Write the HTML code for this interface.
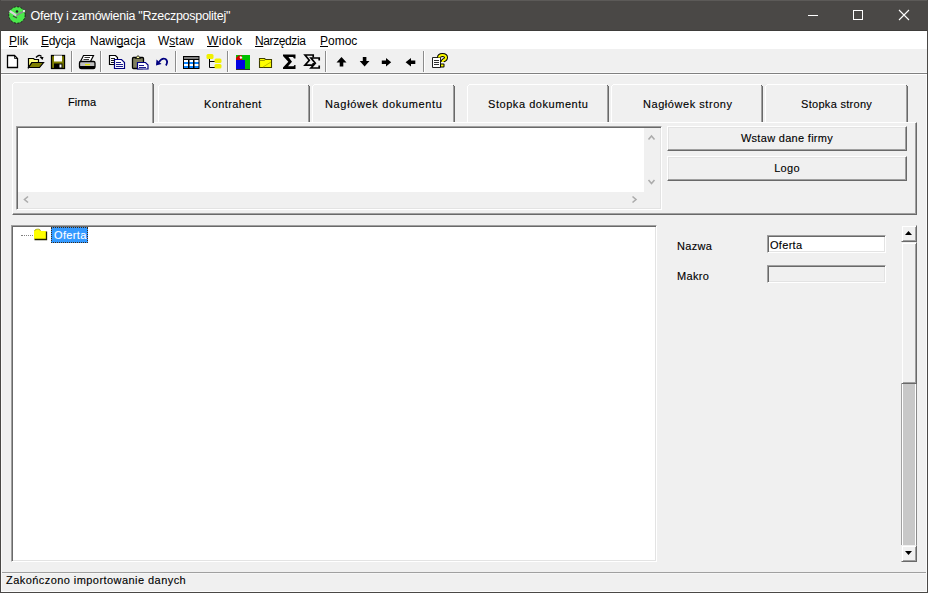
<!DOCTYPE html>
<html><head><meta charset="utf-8">
<style>
*{margin:0;padding:0;box-sizing:border-box}
html,body{width:928px;height:593px;overflow:hidden;background:#f0f0f0;font-family:"Liberation Sans",sans-serif;font-size:12px;color:#000}
.a{position:absolute}
svg{position:absolute;overflow:visible}
#title{left:0;top:0;width:928px;height:31px;background:#4a4846;border-top:1px solid #5c5a58;border-bottom:1px solid #3e3c3a}
#ttxt{left:30.5px;top:9px;color:#fff;font-size:12.5px;white-space:nowrap;letter-spacing:-0.27px}
#menu{left:1px;top:31px;width:926px;height:18px;background:#fff}
.mi{top:34px;font-size:12px;white-space:nowrap;color:#000;line-height:14px}
.mi u{text-decoration:underline;text-underline-offset:1px;text-decoration-skip-ink:none}
.sep{top:51px;width:2px;height:21px;border-left:1px solid #8c8c8c;border-right:1px solid #fff}
#bl{left:0;top:0;width:1px;height:593px;background:#4a4846}
#br{left:927px;top:0;width:1px;height:593px;background:#4a4846}
#bb{left:0;top:592px;width:928px;height:1px;background:#4a4846}
.tab{height:38px;border-top:1px solid #fff;border-left:1px solid #fff;border-right:1px solid #696969;box-shadow:inset -1px 0 0 #a0a0a0;font-size:11px;-webkit-text-stroke:0.12px #000;letter-spacing:0.3px;white-space:nowrap}
.tab::before{content:"";position:absolute;left:-1px;top:-1px;width:2px;height:2px;background:linear-gradient(#fff,#fff) 1px 1px/1px 1px no-repeat,#f0f0f0}
.tab::after{content:"";position:absolute;right:-1px;top:-1px;width:2px;height:2px;background:linear-gradient(#696969,#696969) 0 1px/1px 1px no-repeat,#f0f0f0}
.tab span{position:absolute;top:12px;line-height:14px}
.sunk{border-top:1px solid #a0a0a0;border-left:1px solid #a0a0a0;border-right:1px solid #fff;border-bottom:1px solid #fff;box-shadow:inset 1px 1px 0 #696969,inset -1px -1px 0 #e3e3e3}
.btn{border-top:1px solid #fff;border-left:1px solid #fff;border-right:1px solid #696969;border-bottom:1px solid #696969;box-shadow:inset -1px -1px 0 #a0a0a0,inset 1px 1px 0 #e3e3e3;text-align:center;font-size:11px;-webkit-text-stroke:0.12px #000;letter-spacing:0.3px;white-space:nowrap}
.sbtn{border-top:1px solid #f0f0f0;border-left:1px solid #f0f0f0;border-right:1px solid #696969;border-bottom:1px solid #696969;box-shadow:inset 1px 1px 0 #fff,inset -1px -1px 0 #a0a0a0;background:#f0f0f0}
.lbl{font-size:11px;-webkit-text-stroke:0.12px #000;letter-spacing:0.3px;white-space:nowrap;line-height:14px}
</style></head><body>
<div class="a" id="title"></div>
<svg style="left:8px;top:6px" width="18" height="18" viewBox="0 0 18 18">
<circle cx="9" cy="9" r="8.2" fill="#4be84b" stroke="#102010" stroke-width="0.9" stroke-dasharray="2 1.5"/>
<path d="M1.5 5 Q5 7 8.5 9.5" stroke="#d8d8d8" stroke-width="2.2" fill="none"/>
<path d="M8.5 9.5 Q12 7 16.5 5" stroke="#8a8a8a" stroke-width="1.8" fill="none"/>
<circle cx="9" cy="5.5" r="1.3" fill="#222"/>
<path d="M5 10 L9 12" stroke="#444" stroke-width="1.2" fill="none"/>
<circle cx="16" cy="5" r="1" fill="#fff"/>
</svg>
<div class="a" id="ttxt">Oferty i zamówienia "Rzeczpospolitej"</div>
<div class="a" style="left:808px;top:15px;width:10px;height:1px;background:#fff"></div>
<div class="a" style="left:853px;top:10px;width:10px;height:10px;border:1px solid #fff"></div>
<svg style="left:899px;top:10px" width="10" height="10" viewBox="0 0 10 10"><path d="M0 0 L10 10 M10 0 L0 10" stroke="#fff" stroke-width="1.1"/></svg>

<div class="a" id="menu"></div>
<div class="a mi" style="left:9px"><u>P</u>lik</div>
<div class="a mi" style="left:41px;letter-spacing:-0.3px"><u>E</u>dycja</div>
<div class="a mi" style="left:90px;letter-spacing:0px">Nawi<u>g</u>acja</div>
<div class="a mi" style="left:158px">W<u>s</u>taw</div>
<div class="a mi" style="left:207px;letter-spacing:0.4px"><u>W</u>idok</div>
<div class="a mi" style="left:255px;letter-spacing:-0.4px"><u>N</u>arzędzia</div>
<div class="a mi" style="left:320px"><u>P</u>omoc</div>

<!-- toolbar -->
<div class="a" style="left:1px;top:72px;width:926px;height:1px;background:#f8f8f8"></div>
<div class="a" style="left:1px;top:73px;width:926px;height:1px;background:#808080"></div>
<div class="a" style="left:1px;top:74px;width:926px;height:1px;background:#fff"></div>
<div class="a sep" style="left:71px"></div>
<div class="a sep" style="left:100px"></div>
<div class="a sep" style="left:175px"></div>
<div class="a sep" style="left:227px"></div>
<div class="a sep" style="left:325px"></div>
<div class="a sep" style="left:423px"></div>
<svg style="left:0;top:0" width="460" height="76" viewBox="0 0 460 76">
<!-- new doc x7..17 y55..67 -->
<path d="M7.5 55.5 H14.5 L17.5 58.5 V67.5 H7.5 Z" fill="#fff" stroke="#000" stroke-width="1.3"/>
<path d="M14.5 55.5 V58.5 H17.5" fill="none" stroke="#000" stroke-width="0.8"/>
<!-- open folder x28..43 y55..67 -->
<path d="M28.5 58.5 H33.5 L34.5 59.5 H38.5 V62.5 H32 L28.5 67.5 Z" fill="#ffff80" stroke="#000" stroke-width="1.2"/>
<path d="M28.5 67.5 L32 62.5 H43.5 L39.5 67.5 Z" fill="#808000" stroke="#000" stroke-width="1.2"/>
<path d="M36 57.5 Q39 54 41.5 56.5" fill="none" stroke="#000" stroke-width="1.3"/>
<path d="M39.5 57 H43.5 L42.5 60 Z" fill="#000"/>
<!-- save x51..65 y55..68 -->
<rect x="51.5" y="55.5" width="13" height="13" fill="#808000" stroke="#000" stroke-width="1.3"/>
<rect x="54" y="55.5" width="8" height="6" fill="#fff"/>
<rect x="54" y="63.5" width="8.5" height="5" fill="#000"/>
<rect x="59.5" y="64.5" width="2" height="3" fill="#fff"/>
<!-- printer x79..95 y55..69 -->
<path d="M83.5 55.5 H93.5 L90.5 61.5 H80.5 Z" fill="#fff" stroke="#000" stroke-width="1.2"/>
<path d="M84.5 57.5 H90 M83.5 59.5 H89" stroke="#000" stroke-width="0.8"/>
<rect x="79.5" y="61.5" width="15.5" height="7" rx="1.5" fill="#c0c0c0" stroke="#000" stroke-width="1.3"/>
<rect x="80" y="66" width="15" height="2.5" fill="#000"/>
<rect x="85" y="64" width="5" height="1.3" fill="#e0e000"/>
<!-- copy x109..124 y55..68 -->
<path d="M109.5 55.5 H115.5 L117.5 57.5 V64.5 H109.5 Z" fill="#fff" stroke="#000" stroke-width="1.2"/>
<path d="M111 58.5 H115 M111 60.5 H114 M111 62.5 H114" stroke="#000" stroke-width="0.9"/>
<path d="M114.5 59.5 H121.5 L124.5 62.5 V68.5 H114.5 Z" fill="#fff" stroke="#000080" stroke-width="1.2"/>
<path d="M116 62.5 H121 M116 64.5 H123 M116 66.5 H123" stroke="#000080" stroke-width="0.9"/>
<!-- paste x132..148 y55..69 -->
<rect x="132.5" y="57.5" width="11" height="11" rx="1" fill="#808060" stroke="#000" stroke-width="1.3"/>
<path d="M135.5 58.5 L138 55.5 L140.5 58.5 Z" fill="#ffffa0" stroke="#000" stroke-width="0.8"/>
<path d="M137.5 62.5 H145.5 L148 65 V69 H137.5 Z" fill="#fff" stroke="#000080" stroke-width="1.2"/>
<path d="M139 65.5 H144 M139 67.5 H146" stroke="#000080" stroke-width="0.9"/>
<!-- undo x156..168 y58..66 -->
<path d="M159 62 Q162 57.5 165.5 59 Q168.5 61 166 65.5" fill="none" stroke="#000080" stroke-width="1.8"/>
<path d="M156 65.5 L156.5 59.5 L161.5 64 Z" fill="#000080"/>
<!-- table x183..199 y56..68 -->
<rect x="183" y="56" width="16.5" height="13" fill="#000"/>
<rect x="184" y="57" width="14.5" height="2" fill="#808080"/>
<rect x="184" y="60" width="14.5" height="2" fill="#fff"/>
<rect x="184" y="62" width="14.5" height="2" fill="#0a84ff"/>
<rect x="184" y="64" width="14.5" height="2" fill="#fff"/>
<rect x="184" y="66" width="14.5" height="2" fill="#0a84ff"/>
<rect x="188" y="60" width="1.5" height="8" fill="#000"/>
<rect x="193" y="60" width="1.5" height="8" fill="#000"/>
<!-- tree x207..222 y54..69 -->
<path d="M209.5 58 V67.5 H215 M209.5 61.5 H215" fill="none" stroke="#000" stroke-width="1"/>
<rect x="206.5" y="54" width="7" height="5" rx="1.5" fill="#f0f000"/>
<rect x="214.5" y="58.5" width="7" height="4.5" rx="1.5" fill="#f0f000"/>
<rect x="214.5" y="64" width="7" height="4.5" rx="1.5" fill="#f0f000"/>
<!-- color box x236..250 y55..69 -->
<rect x="236" y="55" width="14" height="14" fill="#00c000"/>
<rect x="236" y="60" width="9" height="9" fill="#0000e0"/>
<rect x="236" y="69" width="14" height="0.8" fill="#000"/>
<path d="M236 60 V58 L238.5 55.5 H242 V60 Z" fill="#d00000"/>
<path d="M239.5 57 L241 56 L242.5 58 L240.5 59 Z" fill="#fff"/>
<!-- folder x259..272 y57..68 -->
<path d="M259.5 58.5 H264.5 L265.5 59.5 H271.5 V67.5 H259.5 Z" fill="#ffff00" stroke="#404000" stroke-width="1.1"/>
<path d="M259.5 60.5 H264.5 L265.5 59.5" fill="none" stroke="#808000" stroke-width="0.8"/>
<path d="M263 67 L271 62" stroke="#c0c000" stroke-width="1"/>
<!-- sigma x283..295 y54..69 -->
<path d="M283 54.5 H295.5 V58.5 H294 L293 57 H288.5 L292 61.8 L288 66.2 H293.5 L294.5 65 H295.5 V69 H283 V67.5 L288.3 61.8 L283 56 Z" fill="#000"/>
<!-- sigma2 x304..320 -->
<path d="M313.2 57.5 V55 H305 L309.3 60.3 L305 65.2 H313.2 V63" fill="none" stroke="#000" stroke-width="1.7"/>
<path d="M319.2 60.5 V58 H311 L315.3 63.2 L311 68 H319.2 V65.5" fill="none" stroke="#000" stroke-width="1.7"/>
<!-- up x337..346 y57..66 -->
<path d="M336.5 62.5 L341.5 57 L346.5 62.5 H343.3 V66.5 H339.7 V62.5 Z" fill="#000"/>
<!-- down x360..369 -->
<path d="M359.7 61 L364.6 66.5 L369.5 61 H366.4 V57 H362.8 V61 Z" fill="#000"/>
<!-- right x382..391 y58..66 -->
<path d="M386 58 L391.2 62.3 L386 66.5 V64 H381.8 V60.5 H386 Z" fill="#000"/>
<!-- left x406..415 -->
<path d="M411 58 L405.6 62.3 L411 66.5 V64 H415.3 V60.5 H411 Z" fill="#000"/>
<!-- help x432..447 y53..68 -->
<path d="M432.5 57.5 H440.5 V67.5 H432.5 Z" fill="#fff" stroke="#222" stroke-width="1"/>
<path d="M434 60.5 H439 M434 62.5 H439 M434 64.5 H439" stroke="#333" stroke-width="1"/>
<path d="M439 57.5 Q439 55 442.5 55 Q446 55 446 57.5 Q446 59.5 443.5 60.3 Q442.5 60.8 442.5 62" fill="none" stroke="#000" stroke-width="4"/>
<rect x="440" y="63.5" width="4.5" height="4" rx="1" fill="#000"/>
<path d="M439 57.5 Q439 55 442.5 55 Q446 55 446 57.5 Q446 59.5 443.5 60.3 Q442.5 60.8 442.5 62" fill="none" stroke="#f8f800" stroke-width="2"/>
<rect x="441" y="64.5" width="2.5" height="2" fill="#f8f800"/>
</svg>


<!-- tab control -->
<div class="a" style="left:12px;top:122px;width:905px;height:93px;border-top:1px solid #fff;border-left:1px solid #fff;border-right:1px solid #696969;border-bottom:1px solid #696969;box-shadow:inset -1px -1px 0 #a0a0a0"></div>
<div class="a tab" style="left:158px;top:84px;width:152px"><span style="left:45px;letter-spacing:0.4px">Kontrahent</span></div>
<div class="a tab" style="left:312px;top:84px;width:143px"><span style="left:12px;letter-spacing:0.65px">Nagłówek dokumentu</span></div>
<div class="a tab" style="left:467px;top:84px;width:142px"><span style="left:20px;letter-spacing:0.55px">Stopka dokumentu</span></div>
<div class="a tab" style="left:611px;top:84px;width:152px"><span style="left:31px;letter-spacing:0.55px">Nagłówek strony</span></div>
<div class="a tab" style="left:765px;top:84px;width:143px"><span style="left:35px">Stopka strony</span></div>
<div class="a tab" style="left:12px;top:82px;width:142px;height:41px;background:#f0f0f0;border-bottom:none"><span style="left:55px;top:12px;letter-spacing:0px">Firma</span></div>

<div class="a sunk" style="left:16px;top:126px;width:646px;height:84px;background:#fff"></div>
<div class="a" style="left:644px;top:128px;width:16px;height:64px;background:#f0f0f0"></div>
<div class="a" style="left:18px;top:192px;width:642px;height:16px;background:#f0f0f0"></div>
<svg style="left:644px;top:128px" width="16" height="80" viewBox="0 0 16 80">
<path d="M4.5 11.5 L7.5 8 L10.5 11.5" stroke="#acacac" stroke-width="1.6" fill="none"/>
<path d="M4.5 52 L7.5 55.5 L10.5 52" stroke="#acacac" stroke-width="1.6" fill="none"/>
</svg>
<svg style="left:18px;top:192px" width="626" height="16" viewBox="0 0 626 16">
<path d="M10 4.5 L6.5 7.5 L10 10.5" stroke="#acacac" stroke-width="1.6" fill="none"/>
<path d="M614.5 4.5 L618 7.5 L614.5 10.5" stroke="#acacac" stroke-width="1.6" fill="none"/>
</svg>

<div class="a btn" style="left:667px;top:126px;width:240px;height:25px;line-height:23px">Wstaw dane firmy</div>
<div class="a btn" style="left:667px;top:156px;width:240px;height:25px;line-height:23px">Logo</div>

<!-- tree -->
<div class="a sunk" style="left:11px;top:225px;width:646px;height:337px;background:#fff"></div>
<div class="a" style="left:21px;top:235px;width:12px;height:1px;border-top:1px dotted #808080"></div>
<svg style="left:33px;top:228px" width="16" height="14" viewBox="0 0 16 14">
<path d="M1 3 V11 H13 V3 H7.5 L6.5 1.5 H2.5 Z" fill="#ffff00"/>
<path d="M1.5 3 Q2 1.2 4 1.2 H6 Q7 1.2 7.5 3" fill="none" stroke="#a0a000" stroke-width="0.8"/>
<path d="M13.5 3.5 V11.5 H1.5" stroke="#202000" stroke-width="1.3" fill="none"/>
</svg>
<div class="a" style="left:51px;top:227px;width:37px;height:16px;background:#3399ff;border:1px dotted #3a2a1a;color:#fff;line-height:14px;padding-left:2px;font-size:11px;-webkit-text-stroke:0.1px #fff;letter-spacing:0.35px">Oferta</div>

<div class="a lbl" style="left:677px;top:239px">Nazwa</div>
<div class="a sunk" style="left:767px;top:235px;width:119px;height:18px;background:#fff;padding:2px 0 0 2px;line-height:14px;font-size:11px;-webkit-text-stroke:0.12px #000;letter-spacing:0.3px">Oferta</div>
<div class="a lbl" style="left:677px;top:269px">Makro</div>
<div class="a sunk" style="left:767px;top:265px;width:119px;height:18px;background:#f0f0f0"></div>

<!-- scrollbar -->
<div class="a" style="left:901px;top:225px;width:16px;height:337px;background:#f0f0f0"></div>
<div class="a sbtn" style="left:901px;top:225px;width:16px;height:17px"></div>
<svg style="left:901px;top:225px" width="16" height="17" viewBox="0 0 16 17"><path d="M4 10 L7.5 6 L11 10 Z" fill="#000"/></svg>
<div class="a sbtn" style="left:901px;top:242px;width:16px;height:142px"></div>
<div class="a" style="left:901px;top:384px;width:16px;height:161px;background:#c8c8c8;border-left:1px solid #a0a0a0;border-right:1px solid #8a8a8a;box-shadow:inset 1px 0 0 #fff,inset -1px 0 0 #fff"></div>
<div class="a sbtn" style="left:901px;top:545px;width:16px;height:17px"></div>
<svg style="left:901px;top:545px" width="16" height="17" viewBox="0 0 16 17"><path d="M4 6 L7.5 10 L11 6 Z" fill="#000"/></svg>

<!-- status -->
<div class="a" style="left:1px;top:572px;width:926px;height:1px;background:#a0a0a0"></div>
<div class="a" style="left:1px;top:573px;width:926px;height:1px;background:#f6f6f6"></div>
<div class="a" style="left:1px;top:591px;width:926px;height:1px;background:#fcfcfc"></div>
<div class="a lbl" style="left:6px;top:573px;letter-spacing:0.44px">Zakończono importowanie danych</div>

<div class="a" style="left:1px;top:75px;width:1px;height:517px;background:#fafafa"></div>
<div class="a" style="left:926px;top:75px;width:1px;height:517px;background:#fafafa"></div>
<div class="a" id="bl"></div>
<div class="a" id="br"></div>
<div class="a" id="bb"></div>
</body></html>
